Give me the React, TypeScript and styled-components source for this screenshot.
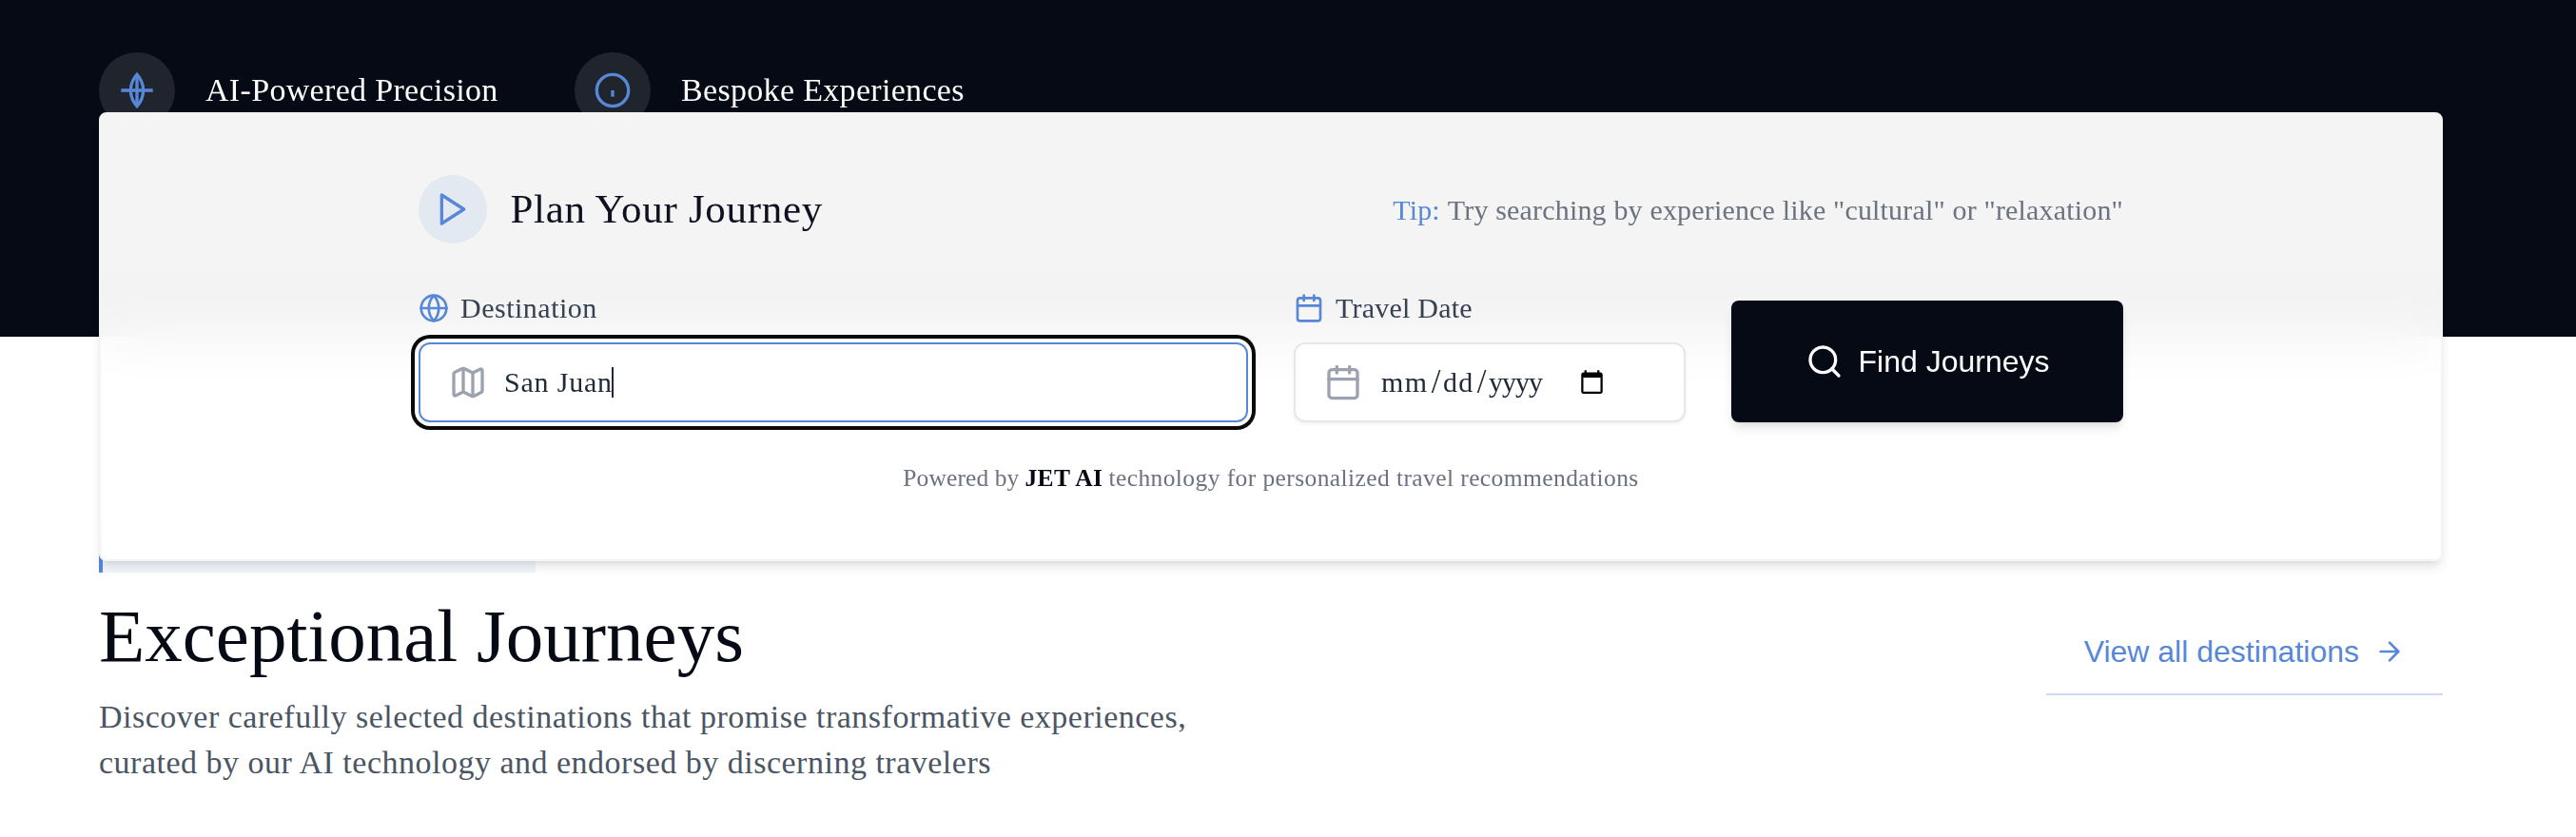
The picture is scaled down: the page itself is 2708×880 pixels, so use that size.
import React from 'react';
import styled, { createGlobalStyle } from 'styled-components';

const navy = '#050a14';
const blue = '#5887d8';
const serif = '"Liberation Serif", serif';
const sans = '"Liberation Sans", sans-serif';

const GlobalStyle = createGlobalStyle`
  *, *::before, *::after { box-sizing: border-box; }
  body { margin: 0; background: #ffffff; font-family: ${serif}; }
  h1, h2, p { margin: 0; font-weight: 400; }
`;

const Page = styled.main`
  height: 880px;
  overflow: hidden;
`;

const Hero = styled.section`
  height: 354px;
  padding: 55px 140px 0 104px;
  background: ${navy};
`;

const Features = styled.div`
  position: relative;
  z-index: 3;
  display: flex;
  height: 80px;
`;

const Feature = styled.div`
  display: flex;
  align-items: center;
  gap: 32px;
  width: 500px;
  white-space: nowrap;
  color: #ffffff;
  font-size: 34px;
  letter-spacing: 0.32px;
`;

const FeatureIcon = styled.span`
  display: flex;
  align-items: center;
  justify-content: center;
  width: 80px;
  height: 80px;
  border-radius: 50%;
  background: rgba(255, 255, 255, 0.11);
`;

const Icon = styled.svg<{ $size?: number; $color?: string }>`
  display: block;
  flex: none;
  width: ${(p) => p.$size ?? 40}px;
  height: ${(p) => p.$size ?? 40}px;
  fill: none;
  stroke: ${(p) => p.$color ?? blue};
  stroke-width: 2;
`;

const SearchCard = styled.section`
  position: relative;
  z-index: 2;
  height: 472px;
  margin: -236px 140px 0 104px;
  padding-top: 64px;
  border: 2px solid #f3f4f6;
  border-radius: 8px;
  background: linear-gradient(rgba(254, 255, 254, 0.957) 160px, rgba(255, 255, 255, 0.95) 190px);
  backdrop-filter: blur(32px);
  box-shadow: 0 8px 12px -2px rgba(0, 0, 0, 0.1), 0 4px 8px -4px rgba(0, 0, 0, 0.1);
`;

const SearchBody = styled.div`
  width: 1792px;
  margin: 0 auto;
`;

const SearchHeader = styled.div`
  display: flex;
  align-items: center;
  height: 72px;
`;

const PlayBadge = styled.span`
  display: flex;
  align-items: center;
  justify-content: center;
  width: 72px;
  height: 72px;
  border-radius: 50%;
  background: rgba(88, 135, 216, 0.1);
`;

const Title = styled.h2`
  flex: 1;
  margin-left: 24.5px;
  color: #0f1020;
  font-size: 43px;
  line-height: 60px;
  letter-spacing: 0.7px;
`;

const Tip = styled.p`
  display: flex;
  gap: 8px;
  padding-top: 2px;
  color: #6b7280;
  font-size: 30px;
  line-height: 40px;
  letter-spacing: 0.17px;
  white-space: nowrap;
`;

const TipLabel = styled.span`
  color: ${blue};
`;

const FormGrid = styled.div`
  display: grid;
  grid-template-columns: 872px 412px 412px;
  column-gap: 48px;
  align-items: end;
  margin-top: 52px;
`;

const Field = styled.div`
  display: flex;
  flex-direction: column;
  gap: 20px;
`;

const Label = styled.div<{ $spacing: number }>`
  display: flex;
  align-items: center;
  gap: 12px;
  height: 32px;
  color: #374151;
  font-size: 30px;
  letter-spacing: ${(p) => p.$spacing}px;
`;

const InputBox = styled.div<{ $focused?: boolean }>`
  display: flex;
  align-items: center;
  height: 84px;
  padding-left: 30px;
  border: 2px solid ${(p) => (p.$focused ? blue : '#e5e7eb')};
  border-radius: 12px;
  background: #ffffff;
  box-shadow: ${(p) =>
    p.$focused ? '0 0 0 4px #ffffff, 0 0 0 8px #0a0a0a' : '0 2px 4px rgba(0, 0, 0, 0.05)'};
  color: #1f2937;
  font-size: 30px;
  line-height: 40px;
`;

const Value = styled.span`
  margin-left: 18px;
  letter-spacing: 0.8px;
`;

const Caret = styled.span`
  width: 2px;
  height: 32px;
  margin-left: -1px;
  background: #1f2937;
`;

const DateValue = styled.div`
  display: flex;
  align-items: center;
  margin-left: 20px;
`;

const DatePart = styled.span<{ $width: number; $spacing: number }>`
  width: ${(p) => p.$width}px;
  letter-spacing: ${(p) => p.$spacing}px;
  white-space: nowrap;
`;

const Slash = styled.span`
  width: 15px;
  text-align: center;
  font-size: 35px;
`;

const PickerIcon = styled.svg`
  width: 27px;
  height: 27px;
  margin: -2px 0 0 37px;
  fill: #000000;
`;

const SubmitButton = styled.button`
  display: flex;
  align-items: center;
  justify-content: center;
  gap: 16px;
  height: 128px;
  padding: 0;
  border: 0;
  border-radius: 8px;
  background: ${navy};
  box-shadow: 0 8px 12px -2px rgba(0, 0, 0, 0.1), 0 4px 8px -4px rgba(0, 0, 0, 0.1);
  color: #ffffff;
  font: 32px/48px ${sans};
`;

const Powered = styled.p`
  display: flex;
  justify-content: center;
  gap: 6px;
  margin-top: 42px;
  color: #6b7280;
  font-size: 25.5px;
  line-height: 34px;
  white-space: nowrap;
`;

const PoweredPart = styled.span<{ $spacing: number }>`
  letter-spacing: ${(p) => p.$spacing}px;
`;

const Brand = styled.strong`
  color: ${navy};
  letter-spacing: 0.4px;
`;

const Journeys = styled.section`
  display: flex;
  align-items: center;
  justify-content: space-between;
  margin: -44px 140px 0 104px;
`;

const Badge = styled.div`
  width: 459px;
  height: 56px;
  border-left: 4px solid ${blue};
  background: rgba(88, 135, 216, 0.08);
`;

const Heading = styled.h1`
  margin-top: 22px;
  color: ${navy};
  font-size: 79px;
  line-height: 90px;
`;

const Lead = styled.p`
  margin-top: 16px;
  color: #4b5563;
  font-size: 34px;
  line-height: 48px;
  letter-spacing: 0.5px;
  white-space: nowrap;
`;

const ViewAll = styled.a`
  display: flex;
  align-items: center;
  gap: 16px;
  height: 90px;
  padding: 0 40px;
  border-bottom: 2px solid #ccdbf3;
  color: ${blue};
  font: 32px/48px ${sans};
  white-space: nowrap;
`;

const CalendarIcon = ({ size, color }: { size: number; color: string }) => (
  <Icon viewBox="0 0 24 24" $size={size} $color={color} strokeLinecap="round" strokeLinejoin="round">
    <rect x="3" y="4" width="18" height="18" rx="2" />
    <path d="M16 2v4M8 2v4M3 10h18" />
  </Icon>
);

export default function App() {
  return (
    <Page>
      <GlobalStyle />
      <Hero>
        <Features>
          <Feature>
            <FeatureIcon>
              <Icon viewBox="0 0 24 24">
                <path d="M12 2v20M2 12h20" />
                <path d="M12 2a15.3 15.3 0 0 1 4 10 15.3 15.3 0 0 1-4 10 15.3 15.3 0 0 1-4-10 15.3 15.3 0 0 1 4-10z" />
              </Icon>
            </FeatureIcon>
            AI-Powered Precision
          </Feature>
          <Feature>
            <FeatureIcon>
              <Icon viewBox="0 0 24 24">
                <circle cx="12" cy="12" r="10" />
                <path d="M12 12v4" />
              </Icon>
            </FeatureIcon>
            Bespoke Experiences
          </Feature>
        </Features>
      </Hero>

      <SearchCard>
        <SearchBody>
          <SearchHeader>
            <PlayBadge>
              <Icon viewBox="0 0 24 24" strokeLinecap="round" strokeLinejoin="round">
                <polygon points="5 3 19 12 5 21 5 3" />
              </Icon>
            </PlayBadge>
            <Title>Plan Your Journey</Title>
            <Tip>
              <TipLabel>Tip:</TipLabel>
              <span>Try searching by experience like "cultural" or "relaxation"</span>
            </Tip>
          </SearchHeader>

          <FormGrid>
            <Field>
              <Label $spacing={0.5}>
                <Icon viewBox="0 0 24 24" $size={32} strokeLinecap="round" strokeLinejoin="round">
                  <circle cx="12" cy="12" r="10" />
                  <path d="M2 12h20" />
                  <path d="M12 2a15.3 15.3 0 0 1 4 10 15.3 15.3 0 0 1-4 10 15.3 15.3 0 0 1-4-10 15.3 15.3 0 0 1 4-10z" />
                </Icon>
                Destination
              </Label>
              <InputBox $focused>
                <Icon viewBox="0 0 24 24" $color="#9ca3af" strokeLinecap="round" strokeLinejoin="round">
                  <path d="M14.106 5.553a2 2 0 0 0 1.788 0l3.659-1.83A1 1 0 0 1 21 4.619v12.764a1 1 0 0 1-.553.894l-4.553 2.277a2 2 0 0 1-1.788 0l-4.212-2.106a2 2 0 0 0-1.788 0l-3.659 1.83A1 1 0 0 1 3 19.381V6.618a1 1 0 0 1 .553-.894l4.553-2.277a2 2 0 0 1 1.788 0z" />
                  <path d="M15 5.764v15M9 3.236v15" />
                </Icon>
                <Value>San Juan</Value>
                <Caret />
              </InputBox>
            </Field>

            <Field>
              <Label $spacing={0.22}>
                <CalendarIcon size={32} color={blue} />
                Travel Date
              </Label>
              <InputBox>
                <CalendarIcon size={40} color="#9ca3af" />
                <DateValue>
                  <DatePart $width={50} $spacing={1.4}>mm</DatePart>
                  <Slash>/</Slash>
                  <DatePart $width={33} $spacing={1.2}>dd</DatePart>
                  <Slash>/</Slash>
                  <DatePart $width={58} $spacing={-1}>yyyy</DatePart>
                </DateValue>
                <PickerIcon viewBox="0 0 24 24">
                  <path d="M20 3h-1V1h-2v2H7V1H5v2H4c-1.1 0-2 .9-2 2v16c0 1.1.9 2 2 2h16c1.1 0 2-.9 2-2V5c0-1.1-.9-2-2-2zm0 18H4V8h16v13z" />
                </PickerIcon>
              </InputBox>
            </Field>

            <SubmitButton type="button">
              <Icon viewBox="0 0 24 24" $color="#ffffff" strokeLinecap="round" strokeLinejoin="round">
                <circle cx="11" cy="11" r="8" />
                <path d="m21 21-4.35-4.35" />
              </Icon>
              Find Journeys
            </SubmitButton>
          </FormGrid>

          <Powered>
            <PoweredPart $spacing={0.1}>Powered by</PoweredPart>
            <Brand>JET AI</Brand>
            <PoweredPart $spacing={0.41}>technology for personalized travel recommendations</PoweredPart>
          </Powered>
        </SearchBody>
      </SearchCard>

      <Journeys>
        <div>
          <Badge />
          <Heading>Exceptional Journeys</Heading>
          <Lead>
            Discover carefully selected destinations that promise transformative experiences,
            <br />
            curated by our AI technology and endorsed by discerning travelers
          </Lead>
        </div>
        <ViewAll>
          View all destinations
          <Icon viewBox="0 0 24 24" $size={32} strokeLinecap="round" strokeLinejoin="round">
            <path d="M5 12h14M12 5l7 7-7 7" />
          </Icon>
        </ViewAll>
      </Journeys>
    </Page>
  );
}
